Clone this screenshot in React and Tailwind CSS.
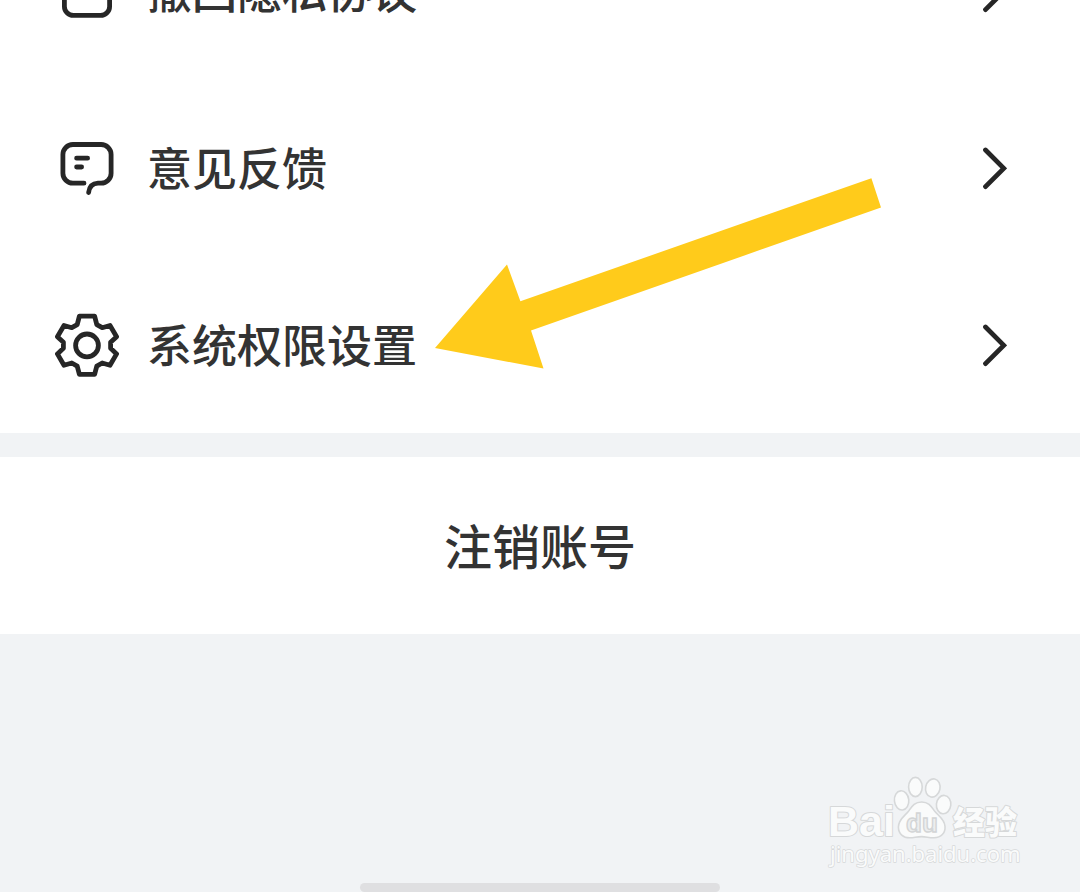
import React from 'react'

const PrivacyIcon = () => (
  <svg viewBox="0 0 64 64" className="size-16" fill="none" stroke="currentColor" strokeWidth="4.8" aria-hidden="true">
    <rect x="9.4" y="8" width="45.2" height="48.4" rx="9" />
  </svg>
)

const FeedbackIcon = () => (
  <svg
    viewBox="0 0 64 64"
    className="size-16"
    fill="none"
    stroke="currentColor"
    strokeWidth="4.8"
    strokeLinecap="round"
    aria-hidden="true"
  >
    <path d="M29 47.2H17.9a10 10 0 0 1-10-10V18.5a10 10 0 0 1 10-10h28.2a10 10 0 0 1 10 10v18.7a10 10 0 0 1-10 10H43q-8.4.4-9.4 9.4" />
    <path d="M21.6 22.2h11M21.6 31h5" />
  </svg>
)

const GearIcon = () => (
  <svg
    viewBox="0 0 64 64"
    className="size-16"
    fill="none"
    stroke="currentColor"
    strokeWidth="4.8"
    strokeLinejoin="round"
    aria-hidden="true"
  >
    <path d="M24.4 3.2h15.2l2.2 8.4 5.4 3.1 7.8-2.2 6.6 11.2-6 5.6v6l6 5.6L55 52.2l-7.8-2.2-5.4 3.1-2.2 8.2H24.4l-2.2-8.2-5.4-3.1L9 52.2 2.4 40.9l6-5.6v-6l-6-5.6L9 12.5l7.8 2.2 5.4-3.1z" />
    <circle cx="32" cy="32.4" r="11.4" />
  </svg>
)

const Chevron = () => (
  <svg
    viewBox="0 0 26 44"
    className="h-11 w-[26px]"
    fill="none"
    stroke="currentColor"
    strokeWidth="4.8"
    strokeLinecap="round"
    aria-hidden="true"
  >
    <path d="M4.5 4 22.8 22.4 4.5 40.6" />
  </svg>
)

const items = [
  { label: '撤回隐私协议', Icon: PrivacyIcon },
  { label: '意见反馈', Icon: FeedbackIcon },
  { label: '系统权限设置', Icon: GearIcon },
]

const Watermark = () => (
  <svg viewBox="0 0 204 100" className="w-[204px] h-[100px]" aria-hidden="true">
    <g fill="#fafbfb" stroke="#d6d8d9" strokeWidth="1.6">
      <ellipse cx="81.6" cy="25.4" rx="7.2" ry="9.6" transform="rotate(-6 81.6 25.4)" />
      <ellipse cx="95.4" cy="12" rx="6.8" ry="9.6" />
      <ellipse cx="112.8" cy="13" rx="7.2" ry="9.2" transform="rotate(12 112.8 13)" />
      <ellipse cx="123.6" cy="29.6" rx="7.2" ry="9.2" transform="rotate(6 123.6 29.6)" />
      <path d="M101.6 27c-7 0-9.4 4-12.6 8.6-3.6 5-10.6 8.4-10.6 16.4 0 7 5 11 11.6 10.8 4.4-.2 7-1.2 11.6-1.2s7.6 1.4 12.4 1.2c7-.2 11.6-4.6 11-11.6-.6-7.6-7.2-10.6-10.8-15.6-3.2-4.6-5.6-8.6-12.6-8.6z" />
    </g>
    <g fill="#fafbfb" stroke="#d6d8d9" strokeWidth="2" strokeLinejoin="round" paintOrder="stroke">
      <text x="8" y="61" fontSize="43" fontWeight="700" fontFamily="Liberation Sans, sans-serif">Bai</text>
      <text x="133" y="59" fontSize="32" fontWeight="900" fontFamily="Noto Sans CJK SC, sans-serif">经验</text>
      <text x="10" y="87" fontSize="22" strokeWidth="1.4" fontFamily="Noto Sans, sans-serif">jingyan.baidu.com</text>
    </g>
    <text x="86" y="57" fontSize="26" fontWeight="700" fill="#eceeef" stroke="#d3d5d6" strokeWidth="1.4" fontFamily="Liberation Sans, sans-serif">du</text>
  </svg>
)

const App = () => {
  return (
    <div className="flex flex-col min-h-screen overflow-hidden bg-[#f1f3f5] text-[#333333] font-['Noto_Sans_CJK_SC',sans-serif]">
      {/* Lista de ajustes, desplazada hacia arriba */}
      <main className="relative bg-white -mt-[98px]">
        <ul>
          {items.map(({ label, Icon }) => (
            <li key={label}>
              <button type="button" className="flex items-center gap-7 w-full h-[177px] pl-[55px] pr-[73px] text-left text-[#262626]">
                <Icon />
                <span className="flex-1 pb-0.5 text-[45px] leading-[60px] font-medium text-[#333333]">{label}</span>
                <Chevron />
              </button>
            </li>
          ))}
        </ul>

        {/* Flecha sobre la última fila */}
        <svg
          viewBox="0 0 448 192"
          className="absolute left-[434px] bottom-[64px] w-[448px] h-[192px] pointer-events-none"
          aria-hidden="true"
        >
          <path d="M1 171 73 87.4 86.4 124.2 437.4 1.2 447 30.5 97 153.5 109.5 191.5z" fill="#ffcb1b" />
        </svg>
      </main>

      <button type="button" className="mt-6 h-[177px] pb-1 bg-white text-center text-[48px] leading-[64px] font-medium">
        注销账号
      </button>

      <footer className="flex flex-col flex-1 justify-end">
        <div className="flex justify-end pr-14 pb-2">
          <Watermark />
        </div>
        <div className="self-center w-1/3 h-[9px] rounded-full bg-[#dfdfe1]" />
      </footer>
    </div>
  )
}

export default App
